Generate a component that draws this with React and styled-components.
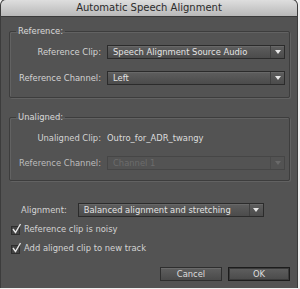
import React from 'react'
import styled, { createGlobalStyle } from 'styled-components'

const Global = createGlobalStyle`
  html, body { margin: 0; padding: 0; background: #f2f2f2; }
  body { font-family: "DejaVu Sans", "Liberation Sans", sans-serif; }
`

const Window = styled.div`
  width: 296px;
  height: 288px;
  margin-left: 1px;
  background: #535353;
  border-radius: 5px 5px 0 0;
  overflow: hidden;
  box-shadow: 0 0 0 1px #3c3c3c;
  display: flex;
  flex-direction: column;
`

const TitleBar = styled.div`
  height: 16px;
  flex: none;
  background: linear-gradient(#dedede, #b8b8b8);
  border-bottom: 1px solid #3a3a3a;
  color: #2b2b2b;
  font-size: 10px;
  line-height: 16px;
  text-align: center;
`

const Body = styled.div`
  padding: 8px 7px 0 8px;
  display: flex;
  flex-direction: column;
  color: #d4d4d4;
  font-size: 8.4px;
`

const Group = styled.fieldset`
  margin: 0 0 ${p => p.$gap || 0}px 0;
  padding: ${p => p.$pad};
  border: 1px solid #3d3d3d;
  border-radius: 2px;
  box-shadow: inset 1px 1px 0 #626262, 1px 1px 0 #626262;
  display: grid;
  grid-template-columns: 91px 1fr;
  column-gap: 6px;
  row-gap: ${p => p.$rowGap}px;
  align-items: center;
`

const Legend = styled.legend`
  margin-left: 6px;
  padding: 0 2px;
  line-height: 12px;
  color: #d8d8d8;
`

const Label = styled.div`
  text-align: right;
  line-height: 14px;
  white-space: nowrap;
  color: ${p => (p.$dim ? '#bdbdbd' : '#d4d4d4')};
`

const Value = styled.div`
  line-height: 14px;
  color: #dcdcdc;
`

const Select = styled.div`
  height: 12px;
  display: flex;
  align-items: stretch;
  border: 1px solid ${p => (p.$disabled ? '#464646' : '#2b2b2b')};
  background: ${p =>
    p.$disabled ? '#535353' : 'linear-gradient(#5e5e5e, #4b4b4b)'};
  box-shadow: ${p => (p.$disabled ? 'none' : 'inset 0 1px 0 #686868')};
  color: ${p => (p.$disabled ? '#6c6c6c' : '#e4e4e4')};
  width: ${p => (p.$width ? `${p.$width}px` : 'auto')};
`

const SelectText = styled.span`
  flex: 1;
  padding-left: 5px;
  line-height: 12px;
  white-space: nowrap;
  overflow: hidden;
`

const Arrow = styled.span`
  width: 13px;
  flex: none;
  border-left: 1px solid ${p => (p.$disabled ? '#4a4a4a' : '#3f3f3f')};
  display: flex;
  align-items: center;
  justify-content: center;
  &::after {
    content: '';
    border-left: 3px solid transparent;
    border-right: 3px solid transparent;
    border-top: 4px solid ${p => (p.$disabled ? '#6a6a6a' : '#e8e8e8')};
  }
`

const AlignRow = styled.div`
  display: flex;
  align-items: center;
  margin-top: 22px;
  padding-left: 12px;
  gap: 11px;
`

const Checks = styled.div`
  display: flex;
  flex-direction: column;
  gap: 5px;
  margin-top: 5px;
  padding-left: 2px;
`

const CheckRow = styled.label`
  display: flex;
  align-items: center;
  gap: 4px;
  line-height: 14px;
`

const Box = styled.span`
  position: relative;
  width: 7px;
  height: 7px;
  border: 1px solid #2e2e2e;
  background: #444;
  flex: none;
  margin-top: 2px;
`

const Tick = styled.svg`
  position: absolute;
  left: 0;
  top: -4px;
`

const Buttons = styled.div`
  display: flex;
  justify-content: flex-end;
  gap: 6px;
  margin-top: 12px;
`

const Button = styled.div`
  width: 60px;
  height: 12px;
  border: 1px solid ${p => (p.$primary ? '#1c1c1c' : '#2e2e2e')};
  box-shadow: ${p =>
    p.$primary ? 'inset 0 0 0 1px #3a3a3a' : 'inset 0 1px 0 #6a6a6a'};
  background: linear-gradient(#5f5f5f, #4a4a4a);
  color: #dedede;
  text-align: center;
  line-height: 12px;
`

function Dropdown({ children, disabled, width }) {
  return (
    <Select $disabled={disabled} $width={width}>
      <SelectText>{children}</SelectText>
      <Arrow $disabled={disabled} />
    </Select>
  )
}

function Check({ children }) {
  return (
    <CheckRow>
      <Box>
        <Tick width="10" height="11" viewBox="0 0 10 11">
          <path d="M1 6 L3.5 9.5 L8.5 1" fill="none" stroke="#e8e8e8" strokeWidth="1.4" />
        </Tick>
      </Box>
      {children}
    </CheckRow>
  )
}

export default function App() {
  return (
    <>
      <Global />
      <Window>
        <TitleBar>Automatic Speech Alignment</TitleBar>
        <Body>
          <Group $pad="8px 4px 12px 0" $rowGap={12} $gap={13}>
            <Legend>Reference:</Legend>
            <Label>Reference Clip:</Label>
            <Dropdown>Speech Alignment Source Audio</Dropdown>
            <Label>Reference Channel:</Label>
            <Dropdown>Left</Dropdown>
          </Group>
          <Group $pad="8px 4px 10px 0" $rowGap={11}>
            <Legend>Unaligned:</Legend>
            <Label>Unaligned Clip:</Label>
            <Value>Outro_for_ADR_twangy</Value>
            <Label $dim>Reference Channel:</Label>
            <Dropdown disabled>Channel 1</Dropdown>
          </Group>
          <AlignRow>
            <span>Alignment:</span>
            <Dropdown width={184}>Balanced alignment and stretching</Dropdown>
          </AlignRow>
          <Checks>
            <Check>Reference clip is noisy</Check>
            <Check>Add aligned clip to new track</Check>
          </Checks>
          <Buttons>
            <Button>Cancel</Button>
            <Button $primary>OK</Button>
          </Buttons>
        </Body>
      </Window>
    </>
  )
}
